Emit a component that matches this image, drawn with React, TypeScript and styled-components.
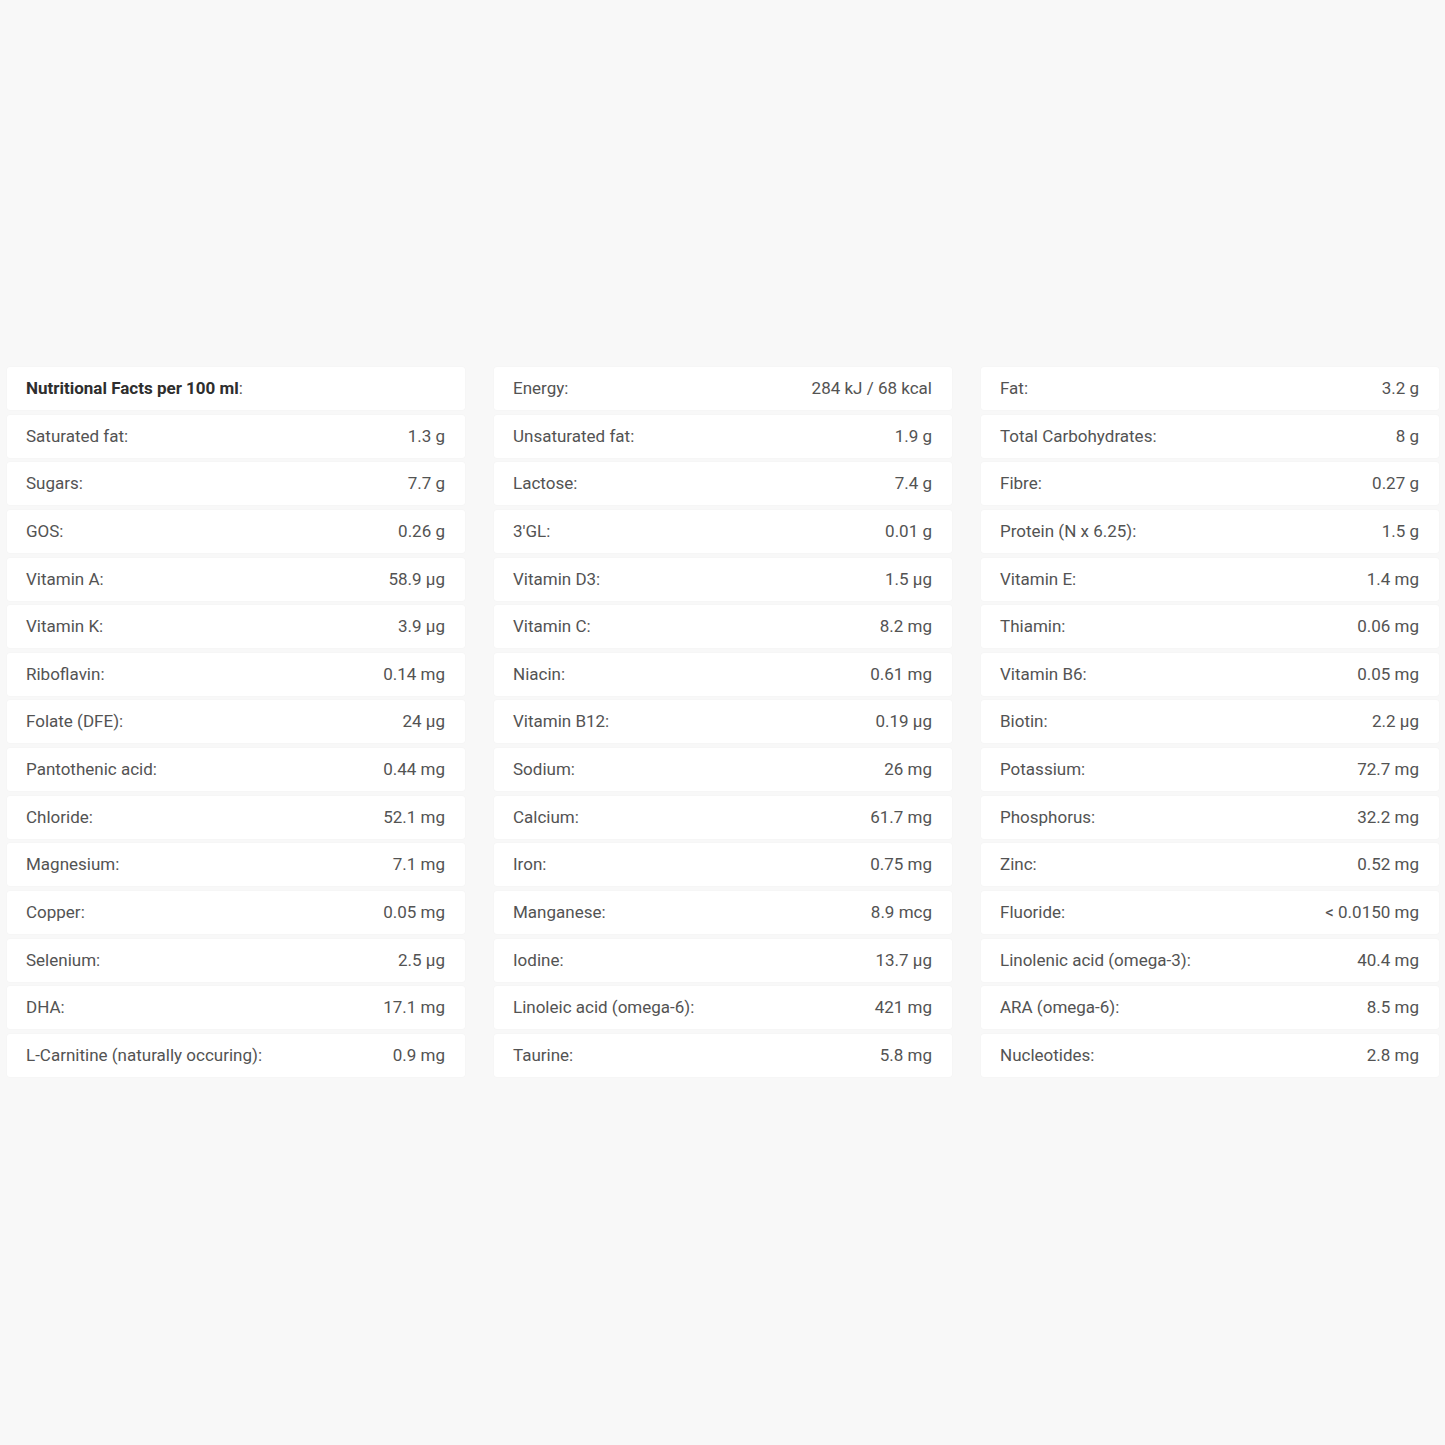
import React from "react";
import styled, { createGlobalStyle } from "styled-components";

const GlobalStyle = createGlobalStyle`
  html, body {
    margin: 0;
    padding: 0;
    background: #f8f8f8;
  }
  body {
    font-family: Roboto, "Liberation Sans", Arial, sans-serif;
  }
`;

const Page = styled.div`
  min-height: 1445px;
  box-sizing: border-box;
  padding: 367px 6px 0 7px;
`;

const Grid = styled.div`
  display: grid;
  grid-template-columns: repeat(3, 458px);
  column-gap: 29px;
  row-gap: 4.65px;
`;

const Cell = styled.div`
  height: 43px;
  box-sizing: border-box;
  background: #ffffff;
  border-radius: 3px;
  box-shadow: 0 0 2px rgba(0, 0, 0, 0.04);
  display: flex;
  align-items: center;
  justify-content: space-between;
  padding: 0 20px 1px 19px;
  font-size: 17px;
  color: #535353;
`;

const Label = styled.span<{ $bold?: boolean }>`
  font-weight: ${(p) => (p.$bold ? 700 : 400)};
  color: ${(p) => (p.$bold ? "#2e2e2e" : "inherit")};
`;

const Value = styled.span`
  text-align: right;
  white-space: nowrap;
`;

type Item = [string, string];

const items: Item[] = [
  ["", ""],
  ["Energy:", "284 kJ / 68 kcal"],
  ["Fat:", "3.2 g"],
  ["Saturated fat:", "1.3 g"],
  ["Unsaturated fat:", "1.9 g"],
  ["Total Carbohydrates:", "8 g"],
  ["Sugars:", "7.7 g"],
  ["Lactose:", "7.4 g"],
  ["Fibre:", "0.27 g"],
  ["GOS:", "0.26 g"],
  ["3'GL:", "0.01 g"],
  ["Protein (N x 6.25):", "1.5 g"],
  ["Vitamin A:", "58.9 µg"],
  ["Vitamin D3:", "1.5 µg"],
  ["Vitamin E:", "1.4 mg"],
  ["Vitamin K:", "3.9 µg"],
  ["Vitamin C:", "8.2 mg"],
  ["Thiamin:", "0.06 mg"],
  ["Riboflavin:", "0.14 mg"],
  ["Niacin:", "0.61 mg"],
  ["Vitamin B6:", "0.05 mg"],
  ["Folate (DFE):", "24 µg"],
  ["Vitamin B12:", "0.19 µg"],
  ["Biotin:", "2.2 µg"],
  ["Pantothenic acid:", "0.44 mg"],
  ["Sodium:", "26 mg"],
  ["Potassium:", "72.7 mg"],
  ["Chloride:", "52.1 mg"],
  ["Calcium:", "61.7 mg"],
  ["Phosphorus:", "32.2 mg"],
  ["Magnesium:", "7.1 mg"],
  ["Iron:", "0.75 mg"],
  ["Zinc:", "0.52 mg"],
  ["Copper:", "0.05 mg"],
  ["Manganese:", "8.9 mcg"],
  ["Fluoride:", "< 0.0150 mg"],
  ["Selenium:", "2.5 µg"],
  ["Iodine:", "13.7 µg"],
  ["Linolenic acid (omega-3):", "40.4 mg"],
  ["DHA:", "17.1 mg"],
  ["Linoleic acid (omega-6):", "421 mg"],
  ["ARA (omega-6):", "8.5 mg"],
  ["L-Carnitine (naturally occuring):", "0.9 mg"],
  ["Taurine:", "5.8 mg"],
  ["Nucleotides:", "2.8 mg"],
];

export default function App() {
  return (
    <>
      <GlobalStyle />
      <Page>
        <Grid>
          {items.map(([label, value], i) =>
            i === 0 ? (
              <Cell key={i}>
                <span>
                  <Label $bold>Nutritional Facts per 100 ml</Label>:
                </span>
              </Cell>
            ) : (
              <Cell key={i}>
                <Label>{label}</Label>
                <Value>{value}</Value>
              </Cell>
            )
          )}
        </Grid>
      </Page>
    </>
  );
}
